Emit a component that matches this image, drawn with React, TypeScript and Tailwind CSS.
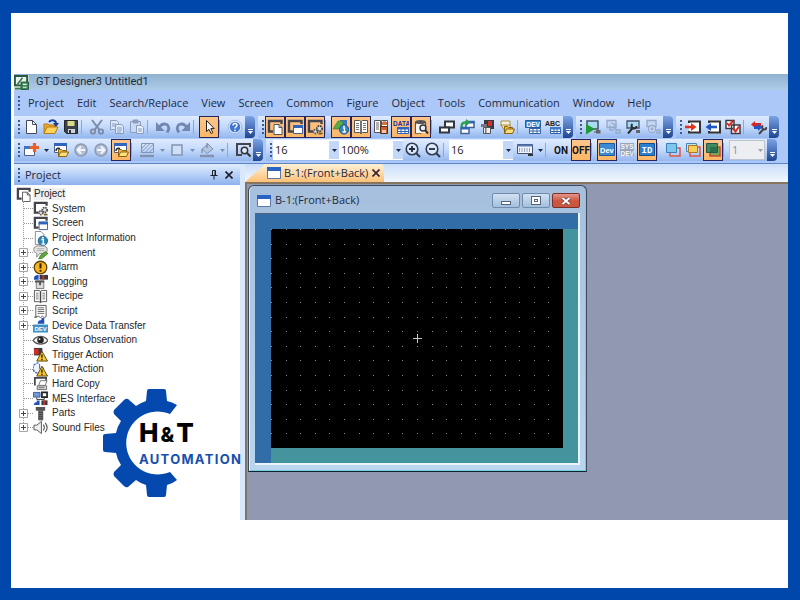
import type { ReactNode } from "react";

/* ---------- icons ---------- */

function Svg({ children, className = "h-4 w-4" }: { children: ReactNode; className?: string }) {
  return (
    <svg viewBox="0 0 16 16" className={`shrink-0 ${className}`} fill="none" aria-hidden="true">
      {children}
    </svg>
  );
}

// dark monitor corner shared by the screen icons
const Monitor = () => <path d="M14.500 5V2H2v10.500h4" stroke="#45444c" strokeWidth="2.400" />;

const Page = ({ x = 0, y = 0 }: { x?: number; y?: number }) => (
  <g transform={`translate(${x} ${y})`}>
    <path d="M.5.5h5l3 3v7h-8z" fill="#fff" stroke="#555" />
    <path d="M5.5.5v3h3" stroke="#555" />
  </g>
);

const Folder = ({ x = 0, y = 0 }: { x?: number; y?: number }) => (
  <g transform={`translate(${x} ${y})`}>
    <path d="M.5 8.500V1.500h3l1 1h4V4" fill="#f2b93a" stroke="#8a6414" />
    <path d="M.5 8.500l2-4.500h8l-2 4.500z" fill="#ffe07a" stroke="#8a6414" />
  </g>
);

const icons: Record<string, ReactNode> = {
  app: (
    <>
      <path d="M0 0h16v16H0z" fill="#cfe3d6" />
      <path d="M1 1h13v10H1z" fill="#e8f4ea" stroke="#28583f" strokeWidth="2" />
      <path d="M3 11l6-8M1 14.500h7" stroke="#3c7a58" strokeWidth="1.800" />
      <path d="M7.500 7.500h8v8h-8z" fill="#3c8a5c" stroke="#28583f" />
      <path d="M9.500 10h4M9.500 13h4" stroke="#e8f4ea" strokeWidth="1.200" />
    </>
  ),
  newFile: <><path d="M3.500 1.500h6l4 4v9h-10z" fill="#fff" stroke="#444a5c" /><path d="M9.500 1.500v4h4" stroke="#444a5c" /></>,
  open: (
    <>
      <path d="M1 14V5h4l1 1h6v3" fill="#f2a62d" stroke="#b57a12" />
      <path d="M1 14.500L4 8h11l-3 6.500z" fill="#ffd35e" stroke="#b57a12" />
      <path d="M6 3c3-3 7-1.500 7 1.500" stroke="#183f9e" strokeWidth="2" />
      <path d="M10 4h6l-3 4z" fill="#183f9e" />
    </>
  ),
  save: (
    <>
      <path d="M1.500 1.500h13v13h-11l-2-2z" fill="#3d4148" stroke="#22252b" />
      <path d="M4.500 2h7v5h-7z" fill="#d9dc86" />
      <path d="M5 10h7v4H5z" fill="#cfd4dc" /><path d="M6 11h2v3H6z" fill="#30343a" />
    </>
  ),
  cut: (
    <g stroke="#7d8ba8">
      <path d="M3 1l7.500 10M13 1L5.500 11" strokeWidth="2" />
      <circle cx="4" cy="12.500" r="2.200" strokeWidth="1.800" /><circle cx="12" cy="12.500" r="2.200" strokeWidth="1.800" />
    </g>
  ),
  copy: (
    <g stroke="#8b9cbd" fill="#dbe7fa">
      <path d="M1.500 1.500h6l2 2v7h-8z" /><path d="M3 5h4M3 7h4" />
      <path d="M6.500 5.500h6l2 2v7h-8z" /><path d="M8 9h5M8 11h5M8 13h4" />
    </g>
  ),
  paste: (
    <g stroke="#8b9cbd" fill="#c9d9f2">
      <path d="M1.500 2.500h10v11h-10z" /><path d="M4 1h5v3H4z" fill="#8b9cbd" />
      <path d="M7.500 6.500h5l2 2v6h-7z" fill="#e5eefc" /><path d="M9 10h4M9 12h4" />
    </g>
  ),
  undo: <><path d="M4 9c3-6 11-5 9.500 2L12 13.500" stroke="#7187b0" strokeWidth="2.800" /><path d="M1 3v9h8.500z" fill="#7187b0" /></>,
  redo: <><path d="M12 9C9 3 1 4 2.500 11L4 13.500" stroke="#7187b0" strokeWidth="2.800" /><path d="M15 3v9H6.500z" fill="#7187b0" /></>,
  cursor: <path d="M5.500 1.500v11l2.500-2.200 2 4.200 1.800-.900-2-4h3.400z" fill="#fff" stroke="#222" />,
  help: (
    <>
      <circle cx="8" cy="8" r="6" fill="#3f74cf" stroke="#dce9fc" strokeWidth="1.500" />
      <circle cx="8" cy="8" r="6.800" stroke="#8fb0e4" strokeWidth=".8" />
      <path d="M6 6.500c0-3 4.200-2.500 4 0-.200 1.300-2 1.300-2 3" stroke="#fff" strokeWidth="1.500" />
      <path d="M7.200 10.800h1.600v1.500H7.200z" fill="#fff" />
    </>
  ),
  scrPage: <><Monitor /><Page x={6.5} y={5} /></>,
  scrWin: (
    <>
      <Monitor />
      <path d="M6.500 6.500h9v8h-9z" fill="#fff" stroke="#4b5c80" /><path d="M6 6h10v3H6z" fill="#2f66bd" />
    </>
  ),
  scrGear: (
    <>
      <Monitor />
      <circle cx="8.500" cy="12.500" r="2" fill="#eee" stroke="#555" strokeWidth="1.800" strokeDasharray="1.500 .7" />
      <circle cx="12.500" cy="9.500" r="2.600" fill="#ddd" stroke="#444" strokeWidth="1.800" strokeDasharray="1.700 .8" />
      <path d="M11.500 14.500h4" stroke="#6b5a1c" strokeWidth="1.800" />
    </>
  ),
  treeInfo: (
    <>
      <path d="M2.500.5h6l3 3v11h-9z" fill="#fff" stroke="#888" />
      <circle cx="10.500" cy="10.500" r="5" fill="#2f87b8" stroke="#1f6591" />
      <path d="M9 9h2v5M9 14h4" stroke="#fff" strokeWidth="1.500" /><circle cx="10.500" cy="7" r="1" fill="#fff" />
    </>
  ),
  info: (
    <>
      <path d="M7 1h7v7H7z" fill="#3a78c9" /><path d="M0 10l5-8h5v8z" fill="#5cab48" stroke="#32742a" strokeWidth=".6" />
      <circle cx="11" cy="10.500" r="4.600" fill="#2f87c8" stroke="#1d5686" />
      <path d="M10 9h1.500v4M9.500 13h3.500" stroke="#fff" strokeWidth="1.300" /><circle cx="11" cy="7.300" r=".9" fill="#fff" />
    </>
  ),
  book: (
    <>
      <path d="M1.500 1.500h5L8 2.500l1.500-1h5v12h-5L8 14.500l-1.500-1h-5z" fill="#fff" stroke="#555" />
      <path d="M8 2.500v12" stroke="#444" strokeWidth="1.500" />
      <path d="M3 4.500h3M3 6.500h3M3 8.500h3M3 10.500h3M10 4.500h3M10 6.500h3M10 8.500h3M10 10.500h3" stroke="#777" />
    </>
  ),
  bookRed: (
    <>
      <path d="M1.500 1.500h6v12h-6zM8.500 1.500h6v6h-6z" fill="#fff" stroke="#555" />
      <path d="M3 4h3M3 6h3M3 8h3M3 10h3M10 3h3" stroke="#666" />
      <path d="M9 3h5v3H9z" fill="#d7703d" /><path d="M7.500 7.500h7v7h-7z" fill="#c9602f" stroke="#5c2b15" />
      <path d="M9 11h4v3H9z" fill="#f3c9a8" />
    </>
  ),
  data: (
    <>
      <text x="0" y="6.500" fontSize="6.500" fontWeight="700" fontFamily="Liberation Sans, sans-serif" fill="#1c2f9c">DATA</text>
      <path d="M4.500 8.500h11v6h-11z" fill="#fff" stroke="#2f66bd" /><path d="M4 8h12v2.500H4z" fill="#2f66bd" />
      <path d="M8 10v5M12 10v5M4 12.500h12" stroke="#2f66bd" />
    </>
  ),
  dbSearch: (
    <>
      <path d="M2.500 3v11h6M12.500 3v4" stroke="#555" strokeWidth="1.300" /><path d="M3 5h9v9H3z" fill="#f5f5f5" />
      <ellipse cx="7.500" cy="3" rx="5.500" ry="2" fill="#555" />
      <circle cx="10" cy="9" r="3" fill="#e3edfb" stroke="#333" strokeWidth="1.400" /><path d="M12 11l3 3.500" stroke="#333" strokeWidth="2" />
    </>
  ),
  cascade: (
    <g fill="#fff" stroke="#33363d" strokeWidth="2">
      <path d="M6 2.500h9v6H6z" /><path d="M1 8.500h9v5H1z" />
    </g>
  ),
  swap: (
    <>
      <path d="M7 2.500h8v6H7zM2 8.500h8v6H2z" fill="#fff" stroke="#43638e" strokeWidth="1.500" />
      <path d="M7 2h8.500v2.500H7zM2 8h8v2.500H2z" fill="#2f66bd" />
      <path d="M2.500 8c0-4 2-5 6-4.500" stroke="#2d9d4f" strokeWidth="2.400" /><path d="M7 0l4.500 3.500L7 7z" fill="#2d9d4f" />
    </>
  ),
  redBlocks: (
    <>
      <path d="M5 1h10v9H5z" fill="#383a43" /><path d="M9 2h4v5H9z" fill="#d4312c" />
      <path d="M2 5h6v3H2z" fill="#777" /><path d="M4.500 8.500h7v6h-7z" fill="#eee" stroke="#555" /><path d="M6 9h1.500v5H6z" fill="#777" />
    </>
  ),
  stack: (
    <>
      <path d="M2 2h9v5H2z" fill="#f6f0d8" stroke="#a98c4a" /><path d="M2 6h9v5H5z" fill="#f6e2a1" stroke="#a98c4a" />
      <Folder x={5} y={6} />
    </>
  ),
  devTable: (
    <>
      <path d="M.500 1.500h15v7H.500z" fill="#3f88cf" stroke="#245b98" />
      <text x="1.500" y="7.500" fontSize="6.500" fontWeight="700" fontFamily="Liberation Sans, sans-serif" fill="#fff">DEV</text>
      <path d="M4.500 9.500h11v5h-11zM8 9v6M12 9v6M4 12h12" fill="#fff" stroke="#3263a8" />
    </>
  ),
  abcTable: (
    <>
      <text x="0" y="6.500" fontSize="7" fontWeight="700" fontFamily="Liberation Sans, sans-serif" fill="#222">ABC</text>
      <path d="M5.500 8.500h10v6h-10z" fill="#fff" stroke="#3263a8" /><path d="M5 8h11v2.500H5z" fill="#3f7acb" />
      <path d="M9 10v5M12 10v5M5 12.500h11" stroke="#3263a8" />
    </>
  ),
  simStart: (
    <>
      <path d="M2 2h11v8H2z" fill="#a9dcf2" stroke="#41536f" strokeWidth="1.500" />
      <path d="M1 5l9 5-9 5.500z" fill="#1f9a35" /><path d="M11 11h4.500v3.500H11z" fill="#666" /><path d="M9 13h2" stroke="#555" />
    </>
  ),
  simOff: (
    <g stroke="#94a9cb" strokeWidth="1.300">
      <path d="M2 1.500h9v7H2z" fill="#c4d6f0" /><path d="M6 4l5 2-3 2 5 4M5 6v5h4" /><path d="M11 11h4v3h-4z" fill="#b9cbe8" />
    </g>
  ),
  simTool: (
    <>
      <path d="M2 2h12v7H2z" fill="#a9dcf2" stroke="#41536f" strokeWidth="1.300" />
      <path d="M3 14.500l5.500-6.500M7.500 5a2.500 2.500 0 1 0 4 2" stroke="#2b2e35" strokeWidth="2" /><path d="M11 11h4v3h-4z" fill="#666" />
    </>
  ),
  simGear: (
    <g stroke="#94a9cb" strokeWidth="1.300">
      <path d="M2 1.500h9v6H2z" fill="#c4d6f0" /><circle cx="7" cy="10" r="3.500" fill="#d4e2f6" /><circle cx="7" cy="10" r="1" />
      <path d="M12 11h3v3h-3z" fill="#b9cbe8" />
    </g>
  ),
  readIn: (
    <>
      <path d="M4 4V2.500h11v11H4V12" fill="#fff" stroke="#333" strokeWidth="2" />
      <path d="M0 8h7" stroke="#e2331f" strokeWidth="2.600" /><path d="M6 4l5.500 4L6 12z" fill="#e2331f" />
    </>
  ),
  writeOut: (
    <>
      <path d="M4 4V2.500h11v11H4V12" fill="#fff" stroke="#333" strokeWidth="2" />
      <path d="M5 8h7" stroke="#2255c4" strokeWidth="2.600" /><path d="M6 4L.500 8 6 12z" fill="#2255c4" />
    </>
  ),
  verify: (
    <>
      <path d="M1 1.500h8v8H1zM6.500 6h8.500v8.500H6.500z" fill="#fff" stroke="#3b3b3f" strokeWidth="1.500" />
      <path d="M2 4l2 2.500 4-4.500M8 9.500l2.500 3L14 7.500" stroke="#db2b23" strokeWidth="2" />
    </>
  ),
  commTool: (
    <>
      <path d="M0 5.500L4 2v7z" fill="#d22" /><path d="M3 5.500h7" stroke="#d22" strokeWidth="3" />
      <path d="M3 8.500h5" stroke="#2255c4" strokeWidth="3" /><path d="M7 5l4 3.500L7 12z" fill="#2255c4" />
      <path d="M8 15l4.500-5M12 6.500a2.200 2.200 0 1 0 3.500 1.500" stroke="#444" strokeWidth="2" />
    </>
  ),
  addStar: (
    <>
      <path d="M1.500 4.500h10v9h-10z" fill="#fff" stroke="#4f6187" /><path d="M1 4h6v3H1z" fill="#3d75c8" />
      <path d="M11.500 1v9M7 5.500h9" stroke="#e8622a" strokeWidth="3.200" />
    </>
  ),
  openScr: (
    <>
      <path d="M1.500 1.500h12v9h-12z" fill="#fff" stroke="#4f6187" /><path d="M1 1h13v3H1z" fill="#2f66bd" />
      <Folder x={5} y={6} />
      <path d="M3 9c0-3 2-3 4-2.500" stroke="#222b3d" strokeWidth="1.500" />
    </>
  ),
  back: <><circle cx="8" cy="8" r="6" fill="#b3bfd4" stroke="#8b98b2" strokeWidth="1.500" /><path d="M12 8H5M8 4.500L4.500 8 8 11.500" stroke="#f3f7fd" strokeWidth="2" /></>,
  forward: <><circle cx="8" cy="8" r="6" fill="#b3bfd4" stroke="#8b98b2" strokeWidth="1.500" /><path d="M4 8H11M8 4.500l3.500 3.500L8 11.500" stroke="#f3f7fd" strokeWidth="2" /></>,
  hatch: (
    <g stroke="#8394b3">
      <path d="M2.500 1.500h12v9h-12zM2 7l6-6M2 10.500L11.500 1M6 10.500L14.500 2M10 10.500l4.500-4.500" /><path d="M1 14h14" strokeWidth="2.500" />
    </g>
  ),
  rect: <path d="M3 3h10v10H3z" fill="#cfdff6" stroke="#8394b3" strokeWidth="1.500" />,
  bucket: (
    <g stroke="#8394b3">
      <path d="M3 7l6-5 5 5-6 4.500z" fill="#b5c5e0" /><path d="M8 6V1M3 7v4" strokeWidth="1.500" /><path d="M1 14h14" strokeWidth="2.500" />
    </g>
  ),
  findScr: (
    <>
      <path d="M15 5V2H2v11h5" stroke="#45444c" strokeWidth="2" />
      <circle cx="9.500" cy="8.500" r="3.200" fill="#dfeafa" stroke="#333" strokeWidth="1.500" /><path d="M12 11l3.500 3.500" stroke="#333" strokeWidth="2" />
    </>
  ),
  zoomIn: <><circle cx="7" cy="7" r="5.800" fill="#dbe7fa" stroke="#333d4f" strokeWidth="1.600" /><path d="M4 7h6M7 4v6" stroke="#222b3d" strokeWidth="1.800" /><path d="M11 11l4 4" stroke="#333d4f" strokeWidth="2.200" /></>,
  zoomOut: <><circle cx="7" cy="7" r="5.800" fill="#dbe7fa" stroke="#333d4f" strokeWidth="1.600" /><path d="M4 7h6" stroke="#222b3d" strokeWidth="1.800" /><path d="M11 11l4 4" stroke="#333d4f" strokeWidth="2.200" /></>,
  gridPad: (
    <>
      <path d="M.500 2.500h15v9H.500z" fill="#eef4ff" stroke="#45506a" /><path d="M.500 2.500h15v2H.500z" fill="#5577b5" />
      <path d="M2 7h12M2 9h12" stroke="#45506a" strokeDasharray="1 1.500" /><path d="M11 13h5" stroke="#333" strokeWidth="2" />
    </>
  ),
  dev: (
    <>
      <path d="M.500 1.500h15v12H.500z" fill="#3c89d6" stroke="#20589b" />
      <text x="1" y="10.500" fontSize="7.500" fontWeight="700" fontFamily="Liberation Sans, sans-serif" fill="#fff">Dev</text>
    </>
  ),
  sysDev: (
    <>
      <path d="M1 1h14v13H1z" fill="#99a5bb" />
      <text x="1.500" y="7" fontSize="6.500" fontWeight="700" fontFamily="Liberation Sans, sans-serif" fill="#f4f7fc">SYS</text>
      <text x="1.500" y="13.500" fontSize="6.500" fontWeight="700" fontFamily="Liberation Sans, sans-serif" fill="#f4f7fc">DEV</text>
    </>
  ),
  id: (
    <>
      <path d="M.500 1.500h15v12H.500z" fill="#2a7fd0" stroke="#174f93" />
      <text x="8" y="10.500" fontSize="9" fontWeight="700" fontFamily="Liberation Mono, monospace" fill="#fff" textAnchor="middle">ID</text>
    </>
  ),
  layerBack: <><path d="M5 6h10v8H5z" stroke="#e05545" strokeWidth="1.500" /><path d="M1.500 1.500h10v9h-10z" fill="#7fc6ef" stroke="#3b7fba" /></>,
  layerMid: <><path d="M1.500 1.500h10v8h-10z" fill="#bfe2f5" stroke="#4587bb" /><path d="M5 5h10v9H5z" stroke="#e05545" strokeWidth="1.500" /><path d="M3.500 3.500h9v7h-9z" fill="#f7cf58" stroke="#b57724" /></>,
  layerAll: <><path d="M5 5h10v9H5z" fill="#79a85b" stroke="#c3482f" strokeWidth="1.500" /><path d="M1.500 1.500h11v9h-11z" fill="#418a5f" stroke="#235a4b" /><path d="M5 5h7v5H5z" fill="#2c6f4b" /></>,
  comment: (
    <>
      <path d="M1 3l3-2h8l3 2v4l-3 2H7l-3 4V9L1 7z" fill="#e6e6e3" stroke="#888" /><path d="M4 4h8M4 6h8" stroke="#aaa" />
      <path d="M6 15l2-4 5-4 3 2-6 5z" fill="#58ab35" stroke="#2f6e1c" strokeWidth=".7" />
    </>
  ),
  alarm: (
    <>
      <circle cx="8" cy="8" r="6.700" fill="#fbb51c" stroke="#5a430d" strokeWidth="1.400" />
      <path d="M8 3.500V9" stroke="#2f2205" strokeWidth="2.200" /><path d="M7 10.500h2v2H7z" fill="#2f2205" />
    </>
  ),
  logging: (
    <>
      <path d="M1 6c0-4 1-5 5-5v5" fill="#1f50bb" />
      <path d="M7 1h9v5H7z" fill="#383a43" /><path d="M10 1h2v5h-2z" fill="#c6362d" />
      <path d="M3.500 7.500h8v8h-8z" fill="#ddd" stroke="#777" /><path d="M2 8h10M7.500 8v4" stroke="#555" strokeWidth="2" />
    </>
  ),
  script: <><path d="M3 1.500h11v12l-2 1-2-1.500-2 1.500-2-1.500-3 1z" fill="#fff" stroke="#555" /><path d="M5 4h7M5 6h7M5 8h7M5 10h7" stroke="#666" /><path d="M1 14h3" stroke="#555" /></>,
  devTransfer: (
    <>
      <path d="M5 6c0-3 2-4 4-4V0h3v6z" fill="#1f50bb" /><path d="M0 7h16v8.500H0z" fill="#3b93c8" />
      <text x="1.500" y="13.500" fontSize="6.500" fontWeight="700" fontFamily="Liberation Sans, sans-serif" fill="#fff">DEV</text>
    </>
  ),
  eye: <><path d="M0 8c4-6 12-6 16 0-4 5-12 5-16 0z" fill="#f5f5f5" stroke="#555" strokeWidth="1.300" /><circle cx="8" cy="7.500" r="3.500" fill="#222" /><circle cx="7" cy="6.500" r="1" fill="#fff" /></>,
  trigger: (
    <>
      <path d="M1 1h9v8H1z" fill="#3a3a3f" /><path d="M1 2h5v6H1z" fill="#cb2f28" />
      <path d="M9.500 4.500l6 10.500H4z" fill="#f7c62b" stroke="#5a430d" /><path d="M9.500 8v3.500M9.500 12.500V14" stroke="#222" strokeWidth="1.500" />
    </>
  ),
  time: (
    <>
      <path d="M6 1a5.500 5.500 0 1 0 5 5" fill="#eef3ff" stroke="#3d5fb8" strokeWidth="1.400" strokeDasharray="2.500 1" /><path d="M7 2v5h2" stroke="#3d5fb8" />
      <path d="M9.500 4.500l6 10.500H4z" fill="#f7c62b" stroke="#5a430d" /><path d="M9.500 8v3.500M9.500 12.500V14" stroke="#222" strokeWidth="1.500" />
    </>
  ),
  hardCopy: (
    <>
      <path d="M2 10V2h12v5" stroke="#45444c" strokeWidth="1.800" />
      <path d="M8 5h7l-2 5H6z" fill="#fff" stroke="#777" /><path d="M4.500 10.500h10v4h-10z" fill="#ddd" stroke="#666" /><path d="M6 12.500h6" stroke="#666" />
    </>
  ),
  mes: (
    <>
      <path d="M.500 1.500h7v5h-7z" fill="#6f9bd8" stroke="#3f5c8e" /><path d="M9.500 1.500h5.500v5H9.500z" fill="#fff" stroke="#222" strokeWidth="1.800" />
      <path d="M4 7v2h8V7" stroke="#333" /><path d="M1 15c0-3 2-3 3-3v-2h3v5z" fill="#1f50bb" /><path d="M9 10h6.500v5H9z" fill="#383a43" /><path d="M11 10h2v5h-2z" fill="#c6362d" />
    </>
  ),
  parts: <><path d="M3 1h10v4H3z" fill="#555" /><path d="M6 5h4.500v10H6z" fill="#777" stroke="#333" strokeWidth=".6" /><path d="M6 7h4.500M6 9h4.500M6 11h4.500M6 13h4.500" stroke="#333" strokeWidth=".8" /></>,
  sound: <><path d="M1 5.500h3l5-4v13l-5-4H1z" fill="#eee" stroke="#555" /><path d="M11 5c1.500 2 1.500 4 0 6M13 3c2.500 3 2.500 7 0 10" stroke="#555" strokeWidth="1.200" /></>,
};

/* ---------- toolbar parts ---------- */

function Arrow({ color = "#1d2a45" }: { color?: string }) {
  return (
    <svg viewBox="0 0 5 3" className="h-[3px] w-[5px]" aria-hidden="true">
      <path d="M0 0h5L2.500 3z" fill={color} />
    </svg>
  );
}

function Grip() {
  return (
    <span className="flex w-[7px] shrink-0 flex-col items-center justify-center gap-0.5 pl-0.5">
      {[0, 1, 2, 3].map((i) => (
        <i key={i} className="size-0.5 bg-[#3c5a94]" />
      ))}
    </span>
  );
}

function Sep() {
  return <span className="my-1 w-1.5 shrink-0 border-r-4 border-l border-r-transparent border-l-[#86a8de] bg-clip-padding" />;
}

function Tool({ icon, on, text }: { icon: string; on?: boolean; text?: string }) {
  return (
    <button
      type="button"
      aria-label={icon}
      className={`flex w-5 shrink-0 items-center justify-center ${
        on ? "border border-[#25245e] bg-linear-to-b from-[#fdc58a] to-[#fcb765]" : ""
      }`}
    >
      {text ? <span className="font-[Roboto,sans-serif] text-[10px] font-bold text-[#14161c]">{text}</span> : <Svg>{icons[icon]}</Svg>}
    </button>
  );
}

function Drop({ dim }: { dim?: boolean }) {
  return (
    <button type="button" aria-label="more" className="flex w-2.5 shrink-0 items-center justify-center">
      <Arrow color={dim ? "#7d8fb3" : "#1d2a45"} />
    </button>
  );
}

function Combo({ label, value, className, disabled }: { label: string; value: string; className: string; disabled?: boolean }) {
  return (
    <label className={`relative my-px flex shrink-0 ${className}`}>
      <select
        aria-label={label}
        disabled={disabled}
        className={`w-full appearance-none pl-0.5 text-[11px] ${
          disabled ? "border border-[#bcc3d0] bg-[#eceef2] text-[#8b909b]" : "bg-white text-[#222]"
        }`}
      >
        <option>{value}</option>
      </select>
      <span
        className={`pointer-events-none absolute inset-y-px right-0 flex w-2.5 items-center justify-center ${
          disabled ? "" : "bg-[#c3d8f8]"
        }`}
      >
        <Arrow color={disabled ? "#9aa0ad" : "#1d2a45"} />
      </span>
    </label>
  );
}

function Group({ children }: { children: ReactNode }) {
  return (
    <div className="flex h-[22px] shrink-0 rounded-r bg-linear-to-b from-[#dfebfe] via-[#c3d9fb] to-[#94b7ee]">
      <Grip />
      {children}
      <span className="flex w-2.5 shrink-0 flex-col items-center justify-end gap-px rounded-r bg-linear-to-b from-[#7ba4e6] to-[#1f4690] pb-1">
        <i className="h-px w-[5px] bg-white" />
        <Arrow color="#fff" />
      </span>
    </div>
  );
}

/* ---------- project tree ---------- */

const tree = [
  { icon: "scrGear", label: "System" },
  { icon: "scrWin", label: "Screen" },
  { icon: "treeInfo", label: "Project Information" },
  { icon: "comment", label: "Comment", more: true },
  { icon: "alarm", label: "Alarm", more: true },
  { icon: "logging", label: "Logging", more: true },
  { icon: "book", label: "Recipe", more: true },
  { icon: "script", label: "Script", more: true },
  { icon: "devTransfer", label: "Device Data Transfer", more: true },
  { icon: "eye", label: "Status Observation" },
  { icon: "trigger", label: "Trigger Action" },
  { icon: "time", label: "Time Action" },
  { icon: "hardCopy", label: "Hard Copy" },
  { icon: "mes", label: "MES Interface" },
  { icon: "parts", label: "Parts", more: true },
  { icon: "sound", label: "Sound Files", more: true },
];

function ProjectTree() {
  return (
    <ul className="relative grid h-[248px] auto-rows-fr font-['Liberation_Sans',Arial,sans-serif] text-[10px] text-[#26262c] before:absolute before:top-3.5 before:bottom-2 before:left-[9px] before:border-l before:border-dotted before:border-[#999]">
      <li className="flex items-center pl-0.5">
        <Svg className="size-[15px]">{icons.scrPage}</Svg>
        <span className="ml-0.5 bg-[#f0eff0] px-px leading-3">Project</span>
      </li>
      {tree.map((n) => (
        <li key={n.label} className="relative flex items-center pl-[5px]">
          <span className="flex w-3.5 items-center">
            {n.more ? (
              <svg viewBox="0 0 9 9" className="size-[9px] shrink-0" aria-hidden="true">
                <path d="M.5.5h8v8h-8z" fill="#fff" stroke="#a5a5a5" />
                <path d="M2 4.500h5M4.500 2v5" stroke="#444" />
              </svg>
            ) : (
              <i className="w-[5px]" />
            )}
            <i className="h-px grow border-t border-dotted border-[#999]" />
          </span>
          <Svg className="size-[15px]">{icons[n.icon]}</Svg>
          <span className="ml-1 leading-3">{n.label}</span>
        </li>
      ))}
    </ul>
  );
}

function Logo() {
  return (
    <div className="pointer-events-none absolute bottom-[23px] left-[89px] flex items-center">
      <svg viewBox="0 0 78 108" className="h-[108px] w-[78px]" aria-hidden="true">
        <path
          fill="#0549ae"
          d="M46 0H61Q63 0 63 2L64 12Q69 13 74 16L67 25A31.500 31.500 0 1 0 67 83L74 91Q69 95 64 96L63 106Q63 108 61 108H46Q44 108 44 106L43 96Q37 94 33 91L25 98Q23 99 21 97L11 87Q10 85 11 83L18 76Q14 70 13 64L2 63Q0 63 0 61V47Q0 45 2 45L13 44Q14 38 18 32L11 25Q10 23 11 21L21 11Q23 9 25 10L33 17Q37 14 43 12L44 2Q44 0 46 0Z"
        />
      </svg>
      <div className="-ml-[42px] font-[Inter,sans-serif]">
        <p className="flex items-baseline gap-0.5 pt-px text-[26px] leading-7 font-extrabold text-black">
          <span>H</span>
          <span className="text-[20px]">&amp;</span>
          <span>T</span>
        </p>
        <p className="text-[13px] leading-5 font-bold tracking-widest text-[#1650ae]">AUTOMATION</p>
      </div>
    </div>
  );
}

/* ---------- drawing canvas ---------- */

const cols = Array.from({ length: 20 }, (_, i) => Math.round(i * 14.6));
const rows = Array.from({ length: 15 }, (_, i) => Math.round(i * 14.6));

function Canvas() {
  return (
    <svg viewBox="0 0 292 219" className="block w-full bg-black" shapeRendering="crispEdges" aria-hidden="true">
      {rows.map((y) => cols.map((x) => <rect key={`${x}-${y}`} x={x} y={y} width="1" height="1" fill="#8c8c84" />))}
      <path d="M142 109h9v1h-9zM146 105h1v9h-1z" fill="#c8c8c8" />
    </svg>
  );
}

function WinIcon() {
  return (
    <svg viewBox="0 0 14 12" className="h-3 w-3.5 shrink-0" aria-hidden="true">
      <path d="M.5.5h13v11H.5z" fill="#fff" stroke="#5b76a8" />
      <path d="M0 0h14v4H0z" fill="#2a62c4" />
    </svg>
  );
}

const winBtn = "flex h-[15px] w-7 items-center justify-center rounded-xs border border-[#6f8bad] bg-linear-to-b from-[#d3e2f2] to-[#a3bfdd]";

function ScreenWindow() {
  return (
    <section className="mt-px ml-px w-[339px] rounded-t-md border border-[#3d4a5e] border-b-[#0e2230] bg-linear-to-b from-[#a5bfdd] to-[#bcd5ee] px-1.5 pb-1.5 shadow-[inset_1px_0_#e3f0fb,inset_-1px_-1px_#6fd0e0]">
      <header className="flex h-[27px] items-center pt-0.5 pl-0.5 text-[11px]">
        <WinIcon />
        <h2 className="ml-1 grow">B-1:(Front+Back)</h2>
        <div className="flex gap-0.5">
          <button type="button" aria-label="Minimize" className={winBtn}>
            <i className="mt-1 h-1 w-2.5 border border-[#56657c] bg-white" />
          </button>
          <button type="button" aria-label="Maximize" className={winBtn}>
            <i className="flex h-[9px] w-2.5 items-center justify-center border border-[#56657c] bg-white">
              <i className="h-[3px] w-1 border border-[#56657c]" />
            </i>
          </button>
          <button
            type="button"
            aria-label="Close"
            className="flex h-[15px] w-7 items-center justify-center rounded-xs border border-[#7c3029] bg-linear-to-b from-[#e0978a] via-[#cf5843] to-[#c8553f]"
          >
            <svg viewBox="0 0 10 8" className="h-2 w-2.5" aria-hidden="true">
              <path d="M1.500 1l7 6M8.500 1l-7 6" stroke="#5b3230" strokeWidth="3.200" />
              <path d="M1.500 1l7 6M8.500 1l-7 6" stroke="#fff" strokeWidth="2" />
            </svg>
          </button>
        </div>
      </header>
      <div className="border-r-2 border-b-2 border-[#eaf4fc]">
        <div className="border-t border-l border-[#4d6488] bg-[#336da8] pt-[15px] pl-[15px]">
          <div className="bg-[#44949d] pr-[15px] pb-[15px]">
            <Canvas />
          </div>
        </div>
      </div>
    </section>
  );
}

/* ---------- page ---------- */

const menus = ["Project", "Edit", "Search/Replace", "View", "Screen", "Common", "Figure", "Object", "Tools", "Communication", "Window", "Help"];

export default function App() {
  return (
    <div className="flex min-h-screen bg-[#0047ab] pt-[13px] pr-3 pb-3 pl-[11px] font-['Open_Sans','Noto_Sans',sans-serif] text-[#1e2a42]">
      <div className="flex min-w-0 grow flex-col bg-white pt-[61px] pb-[68px] pl-[3px]">
        <main className="flex min-w-0 grow flex-col overflow-hidden bg-[#abc8f8]">
          <header className="flex h-4 items-center bg-linear-to-b from-[#8fb2d0] to-[#afcbe8] font-[Roboto,sans-serif] text-[11px]">
            <Svg className="size-[15px]">{icons.app}</Svg>
            <h1 className="ml-[7px]">GT Designer3 Untitled1</h1>
          </header>

          <nav className="flex h-[26px] items-stretch text-[11px]">
            <Grip />
            <div className="ml-[7px] flex items-center gap-[13px]">
              {menus.map((m) => (
                <button key={m} type="button">
                  {m}
                </button>
              ))}
            </div>
          </nav>

          <div className="flex gap-[3px]">
            <Group>
              <Tool icon="newFile" />
              <Tool icon="open" />
              <Tool icon="save" />
              <Sep />
              <Tool icon="cut" />
              <Tool icon="copy" />
              <Tool icon="paste" />
              <Sep />
              <Tool icon="undo" />
              <Tool icon="redo" />
              <Sep />
              <Tool icon="cursor" on />
              <Sep />
              <Tool icon="help" />
            </Group>
            <Group>
              <Tool icon="scrPage" on />
              <Tool icon="scrWin" on />
              <Tool icon="scrGear" on />
              <Sep />
              <Tool icon="info" on />
              <Tool icon="book" on />
              <Tool icon="bookRed" />
              <Tool icon="data" on />
              <Tool icon="dbSearch" on />
              <Sep />
              <Tool icon="cascade" />
              <Tool icon="swap" />
              <Tool icon="redBlocks" />
              <Tool icon="stack" />
              <Sep />
              <Tool icon="devTable" />
              <Tool icon="abcTable" />
            </Group>
            <Group>
              <Tool icon="simStart" />
              <Tool icon="simOff" />
              <Tool icon="simTool" />
              <Tool icon="simGear" />
            </Group>
            <Group>
              <Tool icon="readIn" />
              <Tool icon="writeOut" />
              <Tool icon="verify" />
              <Sep />
              <Tool icon="commTool" />
            </Group>
          </div>

          <div className="mt-px flex gap-[3px]">
            <Group>
              <Tool icon="addStar" />
              <Drop />
              <Tool icon="openScr" />
              <Tool icon="back" />
              <Tool icon="forward" />
              <Tool icon="openScr" on />
              <Sep />
              <Tool icon="hatch" />
              <Drop dim />
              <Tool icon="rect" />
              <Drop dim />
              <Tool icon="bucket" />
              <Drop dim />
              <Sep />
              <Tool icon="findScr" />
            </Group>
            <Group>
              <Combo label="Grid X" value="16" className="w-[66px]" />
              <Combo label="Zoom" value="100%" className="w-16" />
              <Tool icon="zoomIn" />
              <Tool icon="zoomOut" />
              <Sep />
              <Combo label="Grid Y" value="16" className="w-16" />
              <span className="w-0.5" />
              <Tool icon="gridPad" />
              <Drop />
              <Sep />
              <Tool icon="on" text="ON" />
              <Tool icon="off" text="OFF" on />
              <Sep />
              <Tool icon="dev" on />
              <Tool icon="sysDev" />
              <Tool icon="id" on />
              <Sep />
              <Tool icon="layerBack" />
              <Tool icon="layerMid" />
              <Tool icon="layerAll" on />
              <Sep />
              <Combo label="Layer" value="1" className="w-9" disabled />
              <span className="w-0.5" />
            </Group>
          </div>

          <div className="mt-0.5 flex grow border-t border-[#5f86c4] bg-[#d9e8fc]">
            <aside className="relative flex w-[231px] shrink-0 flex-col pr-[5px]">
              <header className="mt-px flex h-5 items-stretch bg-linear-to-b from-[#dfebfd] to-[#8db2ee] text-[11px]">
                <Grip />
                <h2 className="ml-1 flex grow items-center">Project</h2>
                <button type="button" aria-label="Pin" className="mr-[7px]">
                  <svg viewBox="0 0 8 10" className="h-2.5 w-2" fill="none" stroke="#1b1f2b" aria-hidden="true">
                    <path d="M2.500 5.500v-5h3v5M5 .5v5M.5 5.500h7M4 6v3.500" />
                  </svg>
                </button>
                <button type="button" aria-label="Close panel" className="mr-[7px]">
                  <svg viewBox="0 0 8 8" className="size-2" stroke="#1b1f2b" strokeWidth="1.600" aria-hidden="true">
                    <path d="M.5.5l7 7M7.500.5l-7 7" />
                  </svg>
                </button>
              </header>
              <div className="grow bg-white pt-0.5">
                <ProjectTree />
              </div>
              <Logo />
            </aside>

            <div className="flex min-w-0 grow flex-col">
              <div className="flex h-5 items-end border-b-2 border-[#86765f] bg-linear-to-b from-[#c9ddf9] to-[#f2f7fe]">
                <div className="flex h-[18px] items-center rounded-tr-sm bg-linear-to-b from-[#fff0d6] to-[#fcc176] pr-1 pl-[22px] text-[11px] [clip-path:polygon(0_100%,20px_0,100%_0,100%_100%)]">
                  <WinIcon />
                  <span className="ml-[3px]">B-1:(Front+Back)</span>
                  <button type="button" aria-label="Close tab" className="ml-1">
                    <svg viewBox="0 0 8 8" className="size-2" stroke="#3a2432" strokeWidth="1.700" aria-hidden="true">
                      <path d="M.5.5l7 7M7.500.5l-7 7" />
                    </svg>
                  </button>
                </div>
              </div>
              <div className="grow border-l-2 border-[#7b756c] bg-[#9099b1]">
                <ScreenWindow />
              </div>
            </div>
          </div>
        </main>
      </div>
    </div>
  );
}
